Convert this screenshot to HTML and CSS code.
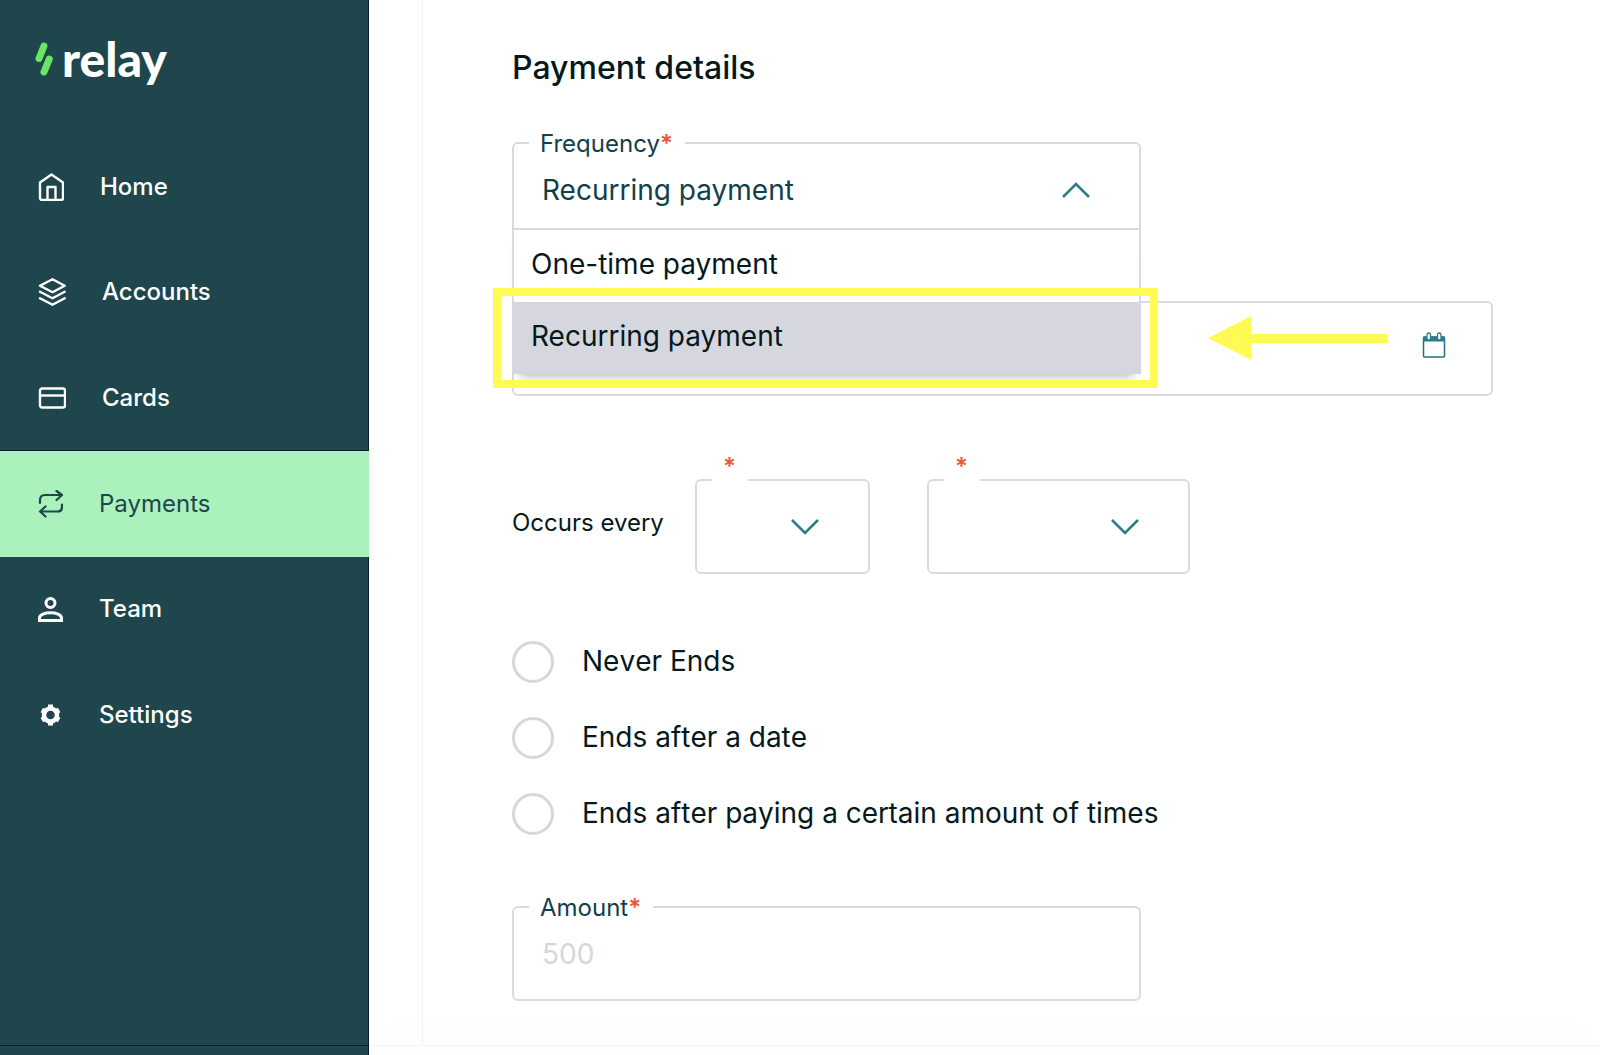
FILE: index.html
```html
<!DOCTYPE html>
<html lang="en">
<head>
  <meta charset="utf-8">
  <meta name="viewport" content="width=device-width, initial-scale=1">
  <title>Relay – Payment details</title>
  <link rel="stylesheet" href="styles.css">
</head>
<body>
  <div class="app">
    <aside class="sidebar">
      <a class="logo" href="#" aria-label="relay">
        <svg width="19" height="36" viewBox="0 0 19 36" fill="none" stroke="#6ce565" stroke-width="7" stroke-linecap="round" aria-hidden="true">
          <path d="M9 5 4 17.500M14.300 18 9 31"/>
        </svg>
        <span class="logo-text">relay</span>
      </a>
      <nav class="nav">
        <a class="nav-item" href="#">
          <svg width="26" height="28" viewBox="0 0 26 28" fill="none" stroke="currentColor" stroke-width="2.400" stroke-linejoin="round" aria-hidden="true">
            <path d="M13.500 1.500 25 9.500V25a2 2 0 0 1-2 2H4a2 2 0 0 1-2-2V9.500zM9.500 27V14h8v13"/>
          </svg>
          Home
        </a>
        <a class="nav-item" href="#">
          <svg width="28" height="28" viewBox="0 0 28 28" fill="none" stroke="currentColor" stroke-width="2.400" stroke-linecap="round" stroke-linejoin="round" aria-hidden="true">
            <path d="M14.500 1.300 26.700 7.700 14.500 14.200 2 7.700zM2 13.800l12.500 6.500L26.700 13.800M2 20.300l12.500 6.400L26.700 20.300"/>
          </svg>
          Accounts
        </a>
        <a class="nav-item" href="#">
          <svg width="28" height="22" viewBox="0 0 28 22" fill="none" stroke="currentColor" stroke-width="2.400" aria-hidden="true">
            <rect x="2" y="1.500" width="25" height="19" rx="2"/>
            <path d="M2 8.500h25"/>
          </svg>
          Cards
        </a>
        <a class="nav-item nav-item-active" href="#" aria-current="page">
          <svg width="25" height="28" viewBox="0 0 25 28" fill="none" stroke="currentColor" stroke-width="2.200" stroke-linecap="round" stroke-linejoin="round" aria-hidden="true">
            <path d="M2 13V10q0-5 5-5H24M18.500 1 24 5 18.500 10M24 14.500V17q0 4.500-4.500 4.500H2M7.500 16.500 2 21.500l5.500 5"/>
          </svg>
          Payments
        </a>
        <a class="nav-item" href="#">
          <svg width="25" height="25" viewBox="0 0 25 25" fill="none" stroke="currentColor" stroke-width="3" aria-hidden="true">
            <circle cx="12.500" cy="6" r="4.500"/>
            <path d="M1.500 23.500V21c0-3.500 5.500-5.300 11-5.300s11 1.800 11 5.300v2.500z"/>
          </svg>
          Team
        </a>
        <a class="nav-item" href="#">
          <svg width="25" height="24" viewBox="0 0 25 24" fill="none" stroke="currentColor" aria-hidden="true">
            <circle cx="12.500" cy="12" r="6.500" stroke-width="4.500"/>
            <path stroke-width="5" stroke-linecap="butt" d="M12.500 5V1.500M12.500 19v3.500M18.560 8.500l2.600-1.500M18.560 15.500l2.600 1.500M6.440 8.500l-2.600-1.500M6.440 15.500l-2.600 1.500"/>
          </svg>
          Settings
        </a>
      </nav>
      <div class="sidebar-foot"></div>
    </aside>

    <div class="page">
      <main class="panel">
        <h1 class="title">Payment details</h1>
        <form class="form">
          <div class="field field-frequency">
            <label class="field-label" for="frequency">Frequency<span class="req">*</span></label>
            <button class="control control-button" id="frequency" type="button" aria-haspopup="listbox" aria-expanded="true">
              Recurring payment
              <svg width="28" height="16" viewBox="0 0 28 16" fill="none" stroke="currentColor" stroke-width="2.600" aria-hidden="true"><path d="M1 15 14 2l13 13"/></svg>
            </button>
            <ul class="options" role="listbox" aria-label="Frequency">
              <li class="option" role="option" aria-selected="false">One-time payment</li>
              <li class="option option-selected" role="option" aria-selected="true">Recurring payment</li>
            </ul>
            <div class="highlight"></div>
            <svg class="arrow" width="180" height="44" viewBox="0 0 180 44" fill="#fffb54" aria-hidden="true"><path d="M0 22 43 0v18h137v9H43v17z"/></svg>
          </div>

          <div class="field field-date">
            <input class="control" type="text" aria-label="Date">
            <button class="date-button" type="button" aria-label="Open calendar">
              <svg width="24" height="26" viewBox="0 0 24 26" aria-hidden="true">
                <rect x="1.500" y="5" width="21" height="20" rx="1" fill="#fff" stroke="#1b747e" stroke-width="1.500"/>
                <path d="M1 4.500h22V9.500H1z" fill="#2f7c86"/>
                <rect x="5" y="1" width="3.500" height="7" rx="1.700" fill="#fff" stroke="#2f7c86" stroke-width="1.300"/>
                <rect x="15.500" y="1" width="3.500" height="7" rx="1.700" fill="#fff" stroke="#2f7c86" stroke-width="1.300"/>
              </svg>
            </button>
          </div>

          <div class="occurs">
            <span class="occurs-text">Occurs every</span>
            <div class="field field-count">
              <label class="field-label field-label-empty" for="count"><span class="req">*</span></label>
              <select class="control" id="count"><option></option></select>
              <svg class="chevron" width="28" height="16" viewBox="0 0 28 16" fill="none" stroke="currentColor" stroke-width="2.600" aria-hidden="true"><path d="M1 1l13 13L27 1"/></svg>
            </div>
            <div class="field field-unit">
              <label class="field-label field-label-empty" for="unit"><span class="req">*</span></label>
              <select class="control" id="unit"><option></option></select>
              <svg class="chevron" width="28" height="16" viewBox="0 0 28 16" fill="none" stroke="currentColor" stroke-width="2.600" aria-hidden="true"><path d="M1 1l13 13L27 1"/></svg>
            </div>
          </div>

          <div class="ends" role="radiogroup" aria-label="Ends">
            <label class="radio"><input type="radio" name="ends"><span class="radio-text">Never Ends</span></label>
            <label class="radio"><input type="radio" name="ends"><span class="radio-text">Ends after a date</span></label>
            <label class="radio"><input type="radio" name="ends"><span class="radio-text">Ends after paying a certain amount of times</span></label>
          </div>

          <div class="field">
            <label class="field-label" for="amount">Amount<span class="req">*</span></label>
            <input class="control" id="amount" type="text" placeholder="500">
          </div>
        </form>
      </main>
      <footer class="page-foot"></footer>
    </div>
  </div>
</body>
</html>
```
FILE: styles.css
```css
* {
  box-sizing: border-box;
}

body {
  margin: 0;
  background: #fff;
  color: #05191d;
  font-family: Inter, "Liberation Sans", sans-serif;
  font-size: 28px;
  line-height: 34px;
}

.app {
  display: grid;
  grid-template-columns: 369px 1fr;
  min-height: 100vh;
}

/* Sidebar */
.sidebar {
  position: relative;
  z-index: 1;
  display: flex;
  flex-direction: column;
  background: #1e464c;
  border-right: 1px solid #04202e;
}

.logo {
  display: flex;
  align-items: flex-start;
  gap: 8px;
  height: 134px;
  padding: 41px 35px 0;
  color: #fff;
  text-decoration: none;
}

.logo-text {
  font-family: Lato, sans-serif;
  font-size: 48px;
  font-weight: 900;
  line-height: 36px;
}

.nav {
  display: grid;
  grid-auto-rows: 1fr;
  height: 634px;
  margin-right: -1px;
}

.nav-item {
  display: flex;
  align-items: center;
  gap: 36px;
  padding: 0 38px;
  color: #fff;
  font-size: 24px;
  font-weight: 500;
  text-decoration: none;
}

.nav-item-active {
  background: #abf1bc;
  box-shadow: 0 -1px #04202e;
  color: #1e464c;
  font-weight: 400;
}

.sidebar-foot {
  height: 10px;
  margin-top: auto;
  border-top: 1px solid #0a1f22;
}

/* Page */
.page {
  display: flex;
  flex-direction: column;
  min-width: 0;
}

.panel {
  flex: 1;
  margin-left: 53px;
  padding: 48px 32px 44px 89px;
  border-left: 1px solid #f1f1f1;
}

.page-foot {
  height: 10px;
  background: #fdfdfd;
  border-top: 1px solid #f5f5f5;
  box-shadow: 0 0 60px rgba(0, 0, 0, 0.05);
}

.title {
  margin: 0 0 54px;
  font-size: 32px;
  font-weight: 500;
  line-height: 40px;
}

/* Fields */
.field {
  position: relative;
  max-width: 629px;
  height: 95px;
}

.field-label {
  position: absolute;
  top: -10px;
  left: 17px;
  padding: 0 12px 0 11px;
  background: #fff;
  color: #10414a;
  font-size: 24px;
  line-height: 24px;
}

.field-label-empty {
  top: -24px;
  padding-bottom: 4px;
}

.req {
  color: #e9573a;
  font-weight: 600;
}

.control {
  display: block;
  width: 100%;
  height: 100%;
  padding: 0 28px;
  appearance: none;
  background: #fff;
  border: 2px solid #dadae2;
  border-radius: 6px;
  color: #10414a;
  font: inherit;
}

.control::placeholder {
  color: #d6d6de;
  opacity: 1;
}

.control-button {
  display: flex;
  align-items: center;
  justify-content: space-between;
  padding-right: 49px;
  text-align: left;
}

.control-button svg,
.chevron {
  color: #2f7c86;
}

.chevron {
  position: absolute;
  top: 40px;
  right: 51px;
  pointer-events: none;
}

.field-frequency {
  z-index: 1;
  margin-bottom: 64px;
}

.options {
  position: absolute;
  top: 86px;
  left: 0;
  right: 0;
  margin: 0;
  padding: 0;
  background: #fff;
  border-top: 2px solid #dadae2;
  box-shadow: 0 10px 10px -8px rgba(0, 0, 0, 0.3);
  list-style: none;
}

.option {
  padding: 17px 17px 21px;
  border: solid #dadae2;
  border-width: 0 2px;
}

.option-selected {
  background: #d6d7de;
  border-color: #d6d7de;
}

/* Callout over the chosen option */
.highlight {
  position: absolute;
  top: 146px;
  left: -19px;
  right: -17px;
  height: 100px;
  border: 8px solid #fffb54;
}

.arrow {
  position: absolute;
  top: 174px;
  left: 696px;
}

.field-date {
  max-width: 981px;
  margin-bottom: 83px;
}

.date-button {
  position: absolute;
  top: 31px;
  right: 47px;
  display: block;
  padding: 0;
  background: none;
  border: 0;
}

.date-button svg {
  display: block;
}

.occurs {
  display: flex;
  align-items: center;
  margin-bottom: 67px;
}

.occurs-text {
  width: 183px;
  padding-bottom: 8px;
  font-size: 24px;
}

.field-count {
  width: 175px;
  margin-right: 57px;
}

.field-unit {
  width: 263px;
}

.ends {
  display: grid;
  gap: 34px;
  margin-bottom: 71px;
}

.radio {
  display: flex;
  align-items: center;
  gap: 28px;
  height: 42px;
}

.radio-text {
  padding-bottom: 3px;
  font-kerning: none;
}

.radio input {
  flex: none;
  width: 42px;
  height: 42px;
  margin: 0;
  appearance: none;
  background: #fff;
  border: 3px solid #d6d6df;
  border-radius: 50%;
}

.radio input:checked {
  border-color: #2f7c86;
  border-width: 12px;
}
```
